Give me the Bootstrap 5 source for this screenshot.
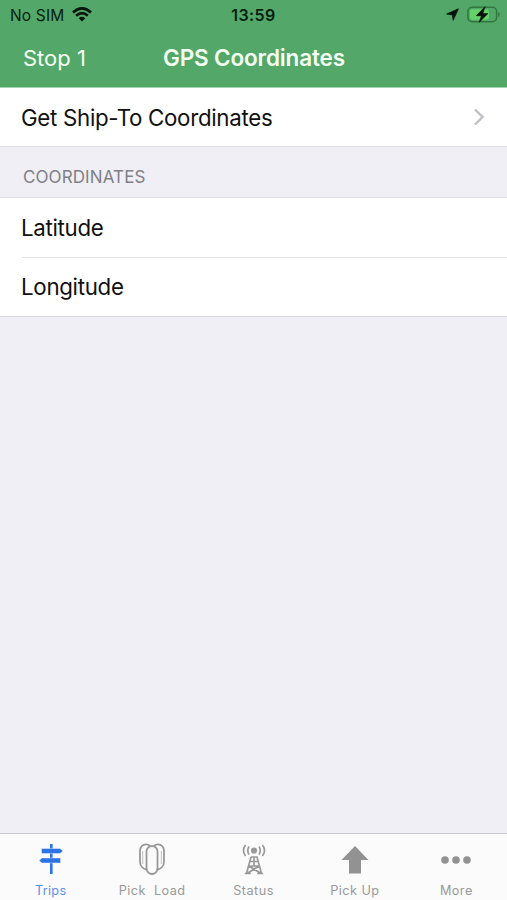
<!DOCTYPE html>
<html lang="en">
<head>
<meta charset="utf-8">
<meta name="viewport" content="width=device-width, initial-scale=1">
<title>GPS Coordinates</title>
<link href="https://cdn.jsdelivr.net/npm/bootstrap@5.3.0/dist/css/bootstrap.min.css" rel="stylesheet">
<style>
  body { font-family: Inter, "Liberation Sans", sans-serif; background: #f0eff5; color: #111; height: 900px; overflow: hidden; }
  svg { display: block; flex: none; }
  .app-header { background: #52a769; height: 88px; border-bottom: 1px solid #a3d2b0; }
  .status-bar { height: 29px; padding: 0 7px 0 10px; font-size: 15.500px; color: #06200e; }
  .status-bar .carrier { width: 160px; letter-spacing: .15px; }
  .status-bar .carrier span { padding-top: 2px; }
  .status-bar .clock { font-weight: 600; font-size: 16px; letter-spacing: .4px; margin-right: 3px; }
  .title-bar { height: 58px; padding: 0 23px; color: #f4fff2; font-size: 22px; }
  .title-bar a { width: 140px; color: inherit; letter-spacing: 0; }
  .title-bar h1 { font-size: 22.5px; font-weight: 600; letter-spacing: -.15px; padding-bottom: 2px; }
  .cell { background: #fff; font-size: 22.3px; letter-spacing: -.3px; padding-left: 21px; color: #111; }
  .cell-link { height: 59px; padding-right: 22px; border-bottom: 1px solid #dcdce0; }
  .cell-link span { padding-top: 2px; }
  .section-label { height: 50px; padding: 11px 0 0 23px; font-size: 17px; letter-spacing: .1px; color: #808085; }
  .group { border-top: 1px solid #dcdce0; border-bottom: 1px solid #dcdce0; height: 120px; }
  .group .first-row { border-bottom: 1px solid #e4e4e6; margin-left: 1px; text-indent: -1px; }
  .tabs { height: 67px; background: #fbfbfb; border-top: 1px solid #c9c9cd; }
  .tabs a { color: #999; font-size: 12.7px; line-height: 15px; letter-spacing: .45px; padding-top: 9px; white-space: pre; }
  .tabs a.active { color: #2d73e6; letter-spacing: .3px; }
  .tabs span { margin-top: 8px; }
  .tabs a.active span { color: #5b90ea; }
</style>
</head>
<body class="d-flex flex-column">
<header class="app-header">
  <div class="status-bar d-flex align-items-center justify-content-between">
    <div class="carrier d-flex align-items-center gap-2"><span>No SIM</span>
      <svg width="20" height="15" viewBox="0 0 20 15" fill="none" stroke="#06150a" stroke-width="2.7"><path d="M1 5.4Q10-2.5 19 5.4M4.1 8.7Q10 3.6 15.9 8.7"/><path d="M6.7 11.2Q10 8.3 13.3 11.2L10 14.4Z" fill="#06150a" stroke="none"/></svg>
    </div>
    <div class="clock">13:59</div>
    <div class="carrier d-flex align-items-center justify-content-end">
      <svg width="13" height="13" viewBox="0 0 13 13" fill="#06150a" stroke="#06150a" stroke-width=".8" stroke-linejoin="round"><path d="M12.4.8 7.2 12.3 6.3 6.900.7 6Z"/></svg>
      <svg class="ms-2" width="33" height="18" viewBox="0 0 33 18"><rect x=".9" y="1.2" width="28.7" height="14.6" rx="4.2" fill="none" stroke="#30783f" stroke-width="1.5"/><rect x="3" y="3.2" width="19" height="10.6" rx="2.3" fill="#65d169"/><path d="M31.2 6v5c2-.8 2-4.2 0-5" fill="#30783f"/><path d="M18.2.6 9.3 9.7h5.1L12.2 16.3 21 7.5h-5.2Z" fill="#061008" stroke="#061008" stroke-width=".6"/></svg>
    </div>
  </div>
  <div class="title-bar d-flex align-items-center">
    <a href="#" class="text-decoration-none">Stop 1</a>
    <h1 class="mb-0 text-nowrap">GPS Coordinates</h1>
  </div>
</header>
<main class="flex-grow-1">
  <a href="#" class="cell cell-link d-flex align-items-center justify-content-between text-decoration-none"><span>Get Ship-To Coordinates</span>
    <svg width="12" height="18" viewBox="0 0 12 18" fill="none" stroke="#c0c0c4" stroke-width="2.4"><path d="m2 1.5 7.6 7.5L2 16.5"/></svg>
  </a>
  <div class="section-label d-flex align-items-center">COORDINATES</div>
  <div class="group cell d-flex flex-column">
    <div class="first-row flex-fill d-flex align-items-center">Latitude</div>
    <div class="flex-fill d-flex align-items-center">Longitude</div>
  </div>
</main>
<nav class="tabs d-flex">
  <a href="#" class="active col d-flex flex-column align-items-center text-decoration-none"><svg width="26" height="32" viewBox="0 0 26 32" fill="#2d73e6"><path d="M12 1h2.600v30H12z"/><path d="M3.500 5.500H22l3 2.500-3 2.500H3.500ZM4 15h18.500v5H4l-3-2.500Z" stroke="#fbfbfb" stroke-width=".4"/></svg><span>Trips</span></a>
  <a href="#" class="col d-flex flex-column align-items-center text-decoration-none"><svg width="26" height="32" viewBox="0 0 26 32" fill="none" stroke="#999" stroke-width="1.800"><path d="M8.500 26.500C4 26.500 1 23 1 19V8C1 2 7.500-.5 11 3M17.500 26.500C22 26.500 25 23 25 19V8c0-6-6.500-8.500-10-5"/><path d="M3.700 21V8M22.300 21V8" stroke-width=".6"/><rect x="7.500" y="3" width="11" height="28" rx="5.500"/></svg><span>Pick  Load</span></a>
  <a href="#" class="col d-flex flex-column align-items-center text-decoration-none"><svg width="26" height="32" viewBox="0 0 26 32" fill="none" stroke="#999" stroke-width="1.700"><circle cx="13" cy="7.500" r="3.100" fill="#999" stroke="none"/><path d="M8 3.500q-2.500 4 0 8M18 3.500q2.500 4 0 8M4.500 2q-4 5.500 0 11M21.500 2q4 5.500 0 11"/><path d="M10 14h6l4.500 16.500M10 14 5.500 30.500M13 14v9M9 18.500h8M8 23h10M8 23l12 7.500M18 23 6 30.500M3.800 30.500h6M16.200 30.500h6"/></svg><span>Status</span></a>
  <a href="#" class="col d-flex flex-column align-items-center text-decoration-none"><svg width="28" height="32" viewBox="0 0 28 32" fill="#929292"><path d="M14 3 27.500 17H20v13.500H8V17H.5Z"/></svg><span>Pick Up</span></a>
  <a href="#" class="col d-flex flex-column align-items-center text-decoration-none"><svg width="32" height="32" viewBox="0 0 32 32" fill="#929292"><circle cx="5" cy="17" r="3.800"/><circle cx="16" cy="17" r="3.800"/><circle cx="27" cy="17" r="3.800"/></svg><span>More</span></a>
</nav>
<script src="https://cdn.jsdelivr.net/npm/bootstrap@5.3.0/dist/js/bootstrap.bundle.min.js"></script>
</body>
</html>
